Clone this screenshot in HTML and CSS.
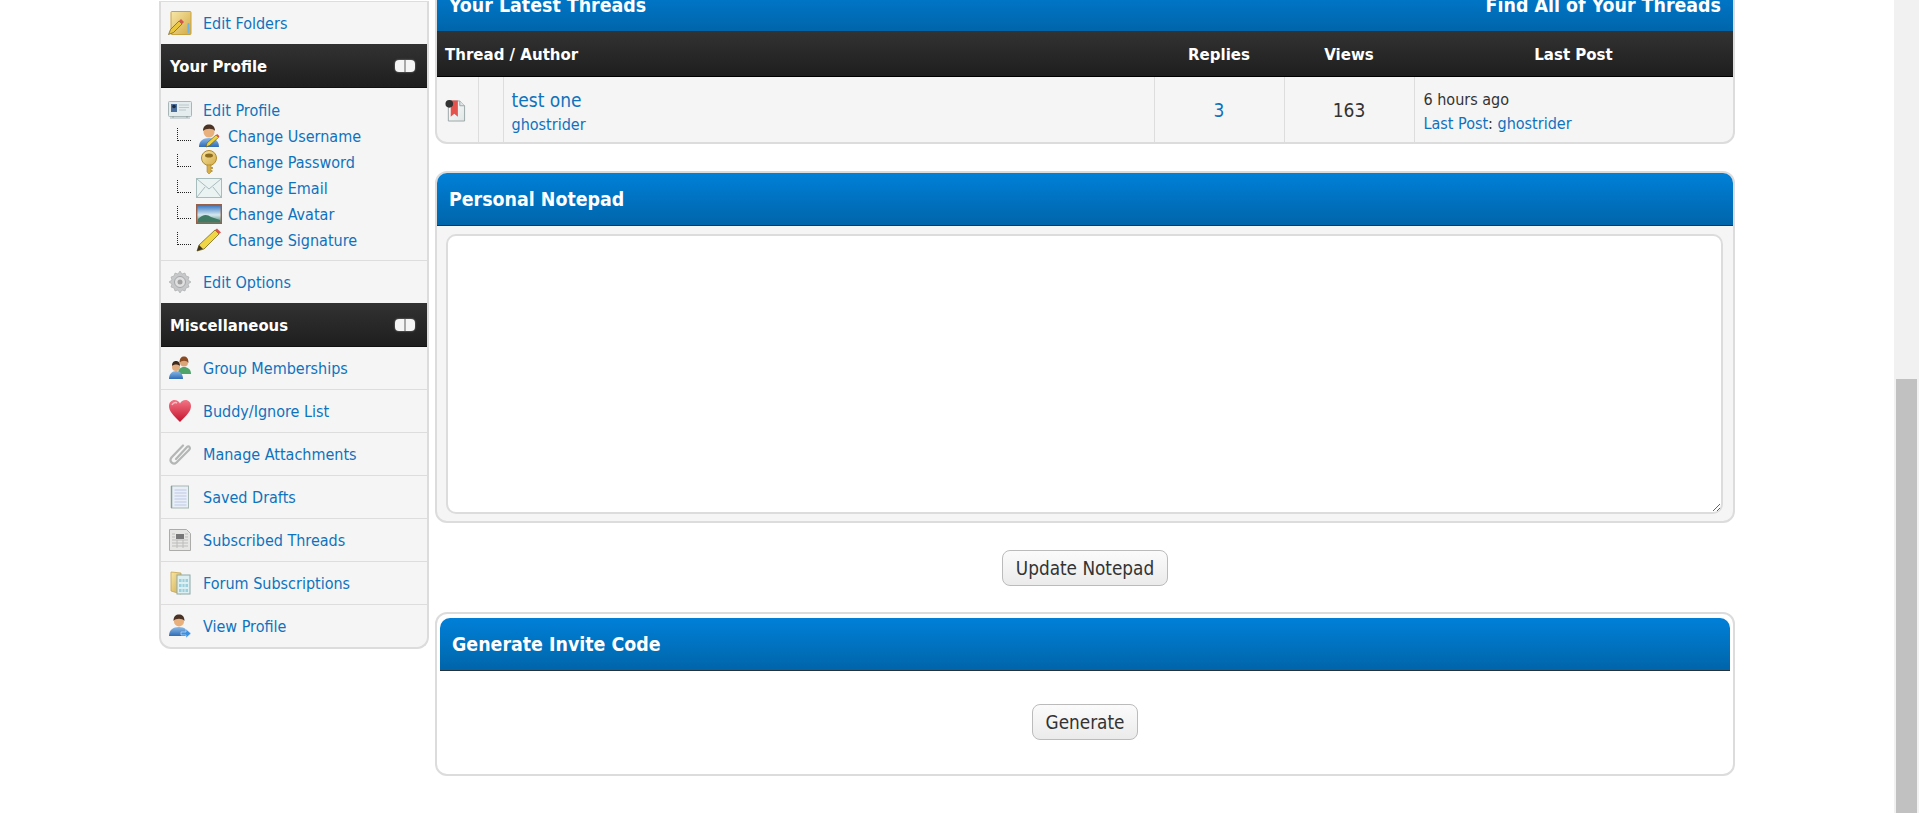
FILE: index.html
```html
<!DOCTYPE html>
<html lang="en">
<head>
<meta charset="utf-8">
<title>User Control Panel</title>
<link rel="stylesheet" href="styles.css">
</head>
<body>
<svg class="defs" width="0" height="0" aria-hidden="true">
  <defs>
    <linearGradient id="gold" x1="0" y1="0" x2="1" y2="1"><stop offset="0" stop-color="#f8e7a8"/><stop offset="1" stop-color="#d2aa44"/></linearGradient>
    <linearGradient id="blueshirt" x1="0" y1="0" x2="0" y2="1"><stop offset="0" stop-color="#8ab9e8"/><stop offset="1" stop-color="#2f6cb5"/></linearGradient>
    <linearGradient id="heart" x1="0" y1="0" x2="0" y2="1"><stop offset="0" stop-color="#f27585"/><stop offset="1" stop-color="#c5122c"/></linearGradient>
    <linearGradient id="sky" x1="0" y1="0" x2="0" y2="1"><stop offset="0" stop-color="#2f6fc0"/><stop offset=".55" stop-color="#d5e9ee"/><stop offset="1" stop-color="#3d7d6a"/></linearGradient>
    <linearGradient id="page" x1="0" y1="0" x2="1" y2="1"><stop offset="0" stop-color="#fff"/><stop offset="1" stop-color="#dfe5e5"/></linearGradient>
  </defs>
</svg>
<div class="page">
  <div class="layout">
    <aside class="sidebar">
      <a class="item item-last" href="#">
        <svg class="ico" viewBox="0 0 24 24"><rect x="3" y=".5" width="20" height="23" rx="1" fill="url(#gold)" stroke="#c9a23e"/><path d="M.5 23.500l2-5L11 10l3 3-8.500 8.500z" fill="#e9c63c" stroke="#6e5c20" stroke-width=".7"/><path d="M11 10l2-2 3 3-2 2z" fill="#d9534f"/><rect x="19.500" y="12" width="2" height="10" rx="1" fill="#6fb4e6"/></svg>
        <span>Edit Folders</span>
      </a>
      <div class="side-head"><span>Your Profile</span><i class="toggle"></i></div>
      <div class="item-group">
        <a class="item-plain" href="#">
          <svg class="ico" viewBox="0 0 24 18"><rect x=".5" y=".5" width="23" height="15" rx="1" fill="#e4ecee" stroke="#a9b6b8"/><rect x="3" y="3" width="6" height="8" fill="#4b6e9c"/><circle cx="6" cy="5.500" r="1.800" fill="#1d2b3e"/><path d="M11 4h10M11 6.500h10M11 9h7" stroke="#bcc8ca"/><path d="M5 15v2M19 15v2" stroke="#8b9a9c"/><path d="M2 17h20" stroke="#a9b6b8"/></svg>
          <span>Edit Profile</span>
        </a>
        <a class="item-sub" href="#"><i class="tree"></i>
          <svg class="ico-sub" viewBox="0 0 24 24"><path d="M2 23c0-6 4-9 10-9s10 3 10 9z" fill="url(#blueshirt)"/><circle cx="12" cy="8" r="5.500" fill="#e8b07c"/><path d="M6 7c0-5 3-6.500 6-6.500s6 1.500 6 6.500c-2-3-9-3-12 0z" fill="#4a3324"/><path d="M9 23l1-4 9-8 2.500 2.500-9 8z" fill="#ecd23c" stroke="#5c5420" stroke-width=".6"/><path d="M19 11l1.200-1 2.300 2.300-1 1.200z" fill="#d9534f"/></svg>
          <span>Change Username</span></a>
        <a class="item-sub" href="#"><i class="tree"></i>
          <svg class="ico-sub" viewBox="0 0 24 24"><circle cx="12" cy="8" r="7.500" fill="url(#gold)" stroke="#b28a2a"/><ellipse cx="12" cy="5.500" rx="4" ry="2" fill="#8f6d1e"/><path d="M10 15h4v7l-2 2-2-2z" fill="#d6ae4a" stroke="#a8842a" stroke-width=".6"/><path d="M14 18h2M14 21h1.500" stroke="#a8842a" stroke-width="1.300"/></svg>
          <span>Change Password</span></a>
        <a class="item-sub" href="#"><i class="tree"></i>
          <svg class="ico-sub ico-wide" viewBox="0 0 26 20"><rect x=".5" y=".5" width="25" height="19" fill="#eaf2f2" stroke="#a7bcbc"/><path d="M1 1l12 10L25 1M1 19l8-10M25 19l-8-10" fill="none" stroke="#a9bcbc"/></svg>
          <span>Change Email</span></a>
        <a class="item-sub" href="#"><i class="tree"></i>
          <svg class="ico-sub ico-wide" viewBox="0 0 26 20"><rect x=".7" y=".7" width="24.600" height="18.600" fill="url(#sky)" stroke="#96604a" stroke-width="1.400"/><path d="M2 15c5-5 9-5 13-2l9 3v2H2z" fill="#3f7a64"/></svg>
          <span>Change Avatar</span></a>
        <a class="item-sub" href="#"><i class="tree"></i>
          <svg class="ico-sub ico-wide" viewBox="0 0 26 24"><path d="M1 23l2-6L19 2l4 4L8 21z" fill="#f0d545" stroke="#7a6a20" stroke-width=".8"/><path d="M19 2l2-1.500 4 4L23 6z" fill="#d9534f"/><path d="M1 23l2-6 4 4z" fill="#3c3424"/></svg>
          <span>Change Signature</span></a>
      </div>
      <a class="item item-last" href="#">
        <svg class="ico" viewBox="0 0 24 24"><path d="M12 1l2 3 3-1 1 3 3 1-1 3 3 2-3 2 1 3-3 1-1 3-3-1-2 3-2-3-3 1-1-3-3-1 1-3-3-2 3-2-1-3 3-1 1-3 3 1z" fill="#c6c8ca" stroke="#a5a7a9" stroke-width=".6"/><circle cx="12" cy="12" r="5.500" fill="#e0e0e0" stroke="#a5a7a9"/><circle cx="12" cy="12" r="2.500" fill="#a0a0a0"/></svg>
        <span>Edit Options</span>
      </a>
      <div class="side-head"><span>Miscellaneous</span><i class="toggle"></i></div>
      <a class="item" href="#">
        <svg class="ico" viewBox="0 0 24 24"><circle cx="16" cy="6.500" r="4" fill="#dca577"/><path d="M11.500 7c0-5 2-6.500 4.500-6.500s4.500 1.500 4.500 6.500c-2-3-7-3-9 0z" fill="#8a4a22"/><path d="M10 18c0-5 2.500-7 6-7s7 2 7 7z" fill="#4da56a"/><circle cx="8" cy="11" r="4" fill="#e0ac80"/><path d="M4 10c0-4 2-5 4-5s4 1 4 5c-2-2-6-2-8 0z" fill="#3d2a1d"/><path d="M1 23c0-5 3-8 7-8s7 3 7 8z" fill="url(#blueshirt)"/></svg>
        <span>Group Memberships</span>
      </a>
      <a class="item" href="#">
        <svg class="ico" viewBox="0 0 24 24"><path d="M12 23C5 16 1 12 1 7c0-3.500 2.500-6 5.500-6C9 1 11 2.500 12 4.500 13 2.500 15 1 17.500 1 20.500 1 23 3.500 23 7c0 5-4 9-11 16z" fill="url(#heart)"/><path d="M4 6c1-2 3-3 5-2" stroke="#fbb9c0" stroke-width="1.500" fill="none"/></svg>
        <span>Buddy/Ignore List</span>
      </a>
      <a class="item" href="#">
        <svg class="ico" viewBox="0 0 24 24"><path d="M8 17L19 5c2-2 4 1 2 3L8.500 20.500c-3 3-8-1-5-5L15 3.500" fill="none" stroke="#b4b6b6" stroke-width="2.200" stroke-linecap="round"/></svg>
        <span>Manage Attachments</span>
      </a>
      <a class="item" href="#">
        <svg class="ico" viewBox="0 0 24 24"><rect x="3.500" y="1" width="17" height="22" fill="#e9eef8" stroke="#a8b8b4"/><path d="M6.500 5h12M6.500 8h12M6.500 11h12M6.500 14h12M6.500 17h12M6.500 20h12" stroke="#bccae4"/><path d="M3.500 1v22" stroke="#86a298" stroke-width="1.500"/></svg>
        <span>Saved Drafts</span>
      </a>
      <a class="item" href="#">
        <svg class="ico" viewBox="0 0 24 24"><path d="M1.500 1.500h17l4 4v17h-21z" fill="#e6e6e4" stroke="#acacaa"/><rect x="8" y="6" width="8" height="5" fill="#777"/><path d="M4 6h3M4 9h3M4 12h16M4 15h16M4 18h16M17 6h3M17 9h3M9 12v8M15 12v8" stroke="#bcbcba"/></svg>
        <span>Subscribed Threads</span>
      </a>
      <a class="item" href="#">
        <svg class="ico" viewBox="0 0 24 24"><path d="M3 1l10 1v21L3 20z" fill="url(#gold)" stroke="#c39c38" stroke-width=".7"/><rect x="9" y="4" width="13" height="19" fill="#dceff2" stroke="#8ea8a8"/><path d="M11 8h9v3h-9zM11 13h9v3h-9zM11 18h9v3h-9z" fill="#9cd0dc"/><path d="M14 8v13M17 8v13" stroke="#dceff2"/></svg>
        <span>Forum Subscriptions</span>
      </a>
      <a class="item item-end" href="#">
        <svg class="ico" viewBox="0 0 24 24"><path d="M1 22c0-6 4-9 10-9s9 3 9 9z" fill="url(#blueshirt)"/><circle cx="11" cy="7.500" r="5" fill="#e8b07c"/><path d="M5.500 7c0-5 2.500-6.500 5.500-6.500s5.500 1.500 5.500 6.500c-2-3-9-3-11 0z" fill="#4a3324"/><path d="M13 18h5v-3l5 4.500-5 4.500v-3h-5z" fill="#3d8fe0" stroke="#dfefff" stroke-width=".6"/></svg>
        <span>View Profile</span>
      </a>
    </aside>
    <main class="content">
      <section class="panel">
        <header class="panel-head head-split"><span>Your Latest Threads</span><a class="head-link" href="#">Find All of Your Threads</a></header>
        <table class="threads">
          <colgroup>
            <col class="c-ico"><col class="c-pre"><col class="c-main"><col class="c-num"><col class="c-num"><col class="c-last">
          </colgroup>
          <thead>
            <tr><th colspan="3" class="th-left">Thread / Author</th><th>Replies</th><th>Views</th><th>Last Post</th></tr>
          </thead>
          <tbody>
            <tr>
              <td class="cell-ico">
                <svg class="ico-thread" viewBox="0 0 22 24"><path d="M3.500 1.500h12l5 5v16h-17z" fill="url(#page)" stroke="#9aa6a6"/><path d="M15.500 1.500v5h5" fill="#dfe5e5" stroke="#9aa6a6"/><path d="M6 1h7.500v17L9.700 15 6 18z" fill="#e5534f"/><circle cx="4.500" cy="4.500" r="4" fill="#333"/></svg>
              </td>
              <td></td>
              <td class="cell-main"><a class="thread-title" href="#">test one</a><a class="thread-author" href="#">ghostrider</a></td>
              <td class="cell-num"><a href="#">3</a></td>
              <td class="cell-num">163</td>
              <td class="cell-last"><span class="last-time">6 hours ago</span><span class="last-by"><a href="#">Last Post</a>: <a href="#">ghostrider</a></span></td>
            </tr>
          </tbody>
        </table>
      </section>
      <section class="panel panel-note">
        <header class="panel-head"><span>Personal Notepad</span></header>
        <div class="note-body"><textarea class="note" aria-label="Personal Notepad"></textarea></div>
      </section>
      <div class="actions"><button class="btn" type="button">Update Notepad</button></div>
      <section class="panel panel-invite">
        <header class="panel-head invite-head"><span>Generate Invite Code</span></header>
        <div class="invite-body"><button class="btn" type="button">Generate</button></div>
      </section>
    </main>
  </div>
</div>
<div class="scrollbar"><div class="thumb"></div></div>
</body>
</html>
```
FILE: styles.css
```css
* { box-sizing: border-box; }
html, body { height: 100%; }
body {
  margin: 0;
  display: flex;
  overflow: hidden;
  background: #fff;
  color: #333;
  font-family: "DejaVu Sans Condensed", "DejaVu Sans", sans-serif;
  font-size: 16px;
}
a { color: #0f72bd; text-decoration: none; }
.defs { position: absolute; }
.page { flex: 1; min-width: 0; overflow: hidden; }
.layout {
  display: flex;
  align-items: flex-start;
  gap: 6px;
  margin: -23px 0 0 159px;
  width: 1576px;
}
.sidebar {
  width: 270px;
  flex: none;
  margin-top: 24px;
  background: #f5f5f5;
  border: 2px solid #dcdcdc;
  border-top: 1px solid #ddd;
  border-radius: 0 0 12px 12px;
}
.item {
  display: flex;
  align-items: center;
  height: 43px;
  padding-left: 7px;
  border-bottom: 1px solid #ddd;
  gap: 11px;
  background: #f5f5f5;
}
.item-last { border-bottom: 0; border-radius: 0 0 12px 12px; height: 42px; }
.item-end { border-bottom: 0; border-radius: 0 0 12px 12px; height: 42px; }
.ico { width: 24px; height: 24px; flex: none; }
.side-head {
  display: flex;
  align-items: center;
  justify-content: space-between;
  height: 44px;
  padding: 1px 12px 0 9px;
  background: linear-gradient(#323232, #1e1e1e);
  border-bottom: 1px solid #111;
  color: #fff;
  font-weight: 700;
  font-size: 16.500px;
}
.toggle {
  width: 20px;
  height: 12px;
  border-radius: 4px;
  background: linear-gradient(90deg, #f4f4f4 0 46%, #a8a8a8 46% 54%, #f4f4f4 54%);
  box-shadow: 0 0 2px rgba(255, 255, 255, .5);
}
.item-group { padding: 9px 0 7px; border-bottom: 1px solid #ddd; }
.item-plain {
  display: flex;
  align-items: center;
  height: 26px;
  padding-left: 7px;
  gap: 11px;
}
.item-sub {
  display: flex;
  align-items: center;
  height: 26px;
  padding-left: 16px;
}
.tree {
  width: 14px;
  height: 13px;
  margin: -3px 0 0;
  flex: none;
  border-left: 1px dotted #222;
  border-bottom: 1px dotted #222;
}
.ico-sub { width: 24px; height: 24px; flex: none; margin: 0 7px 0 6px; }
.ico-wide { width: 26px; margin: 0 6px 0 5px; }
.content { width: 1300px; flex: none; }
.panel {
  border: 2px solid #dcdcdc;
  border-radius: 12px;
  background: #f5f5f5;
  overflow: hidden;
}
.panel-head {
  height: 53px;
  display: flex;
  align-items: center;
  padding: 0 12px;
  background: linear-gradient(#0080d8, #0065aa);
  border-bottom: 1px solid #263238;
  color: #fff;
  font-weight: 700;
  font-size: 19.400px;
}
.head-split { justify-content: space-between; }
.head-link { color: #fff; }
.threads { width: 100%; border-collapse: collapse; table-layout: fixed; }
.c-ico { width: 41px; }
.c-pre { width: 25px; }
.c-main { width: 651px; }
.c-num { width: 130px; }
.threads th {
  height: 44px;
  background: linear-gradient(#323232, #1e1e1e);
  border-bottom: 1px solid #000;
  color: #fff;
  font-size: 16.700px;
  font-weight: 700;
  padding: 0;
}
.threads .th-left { text-align: left; padding-left: 8px; }
.threads td { height: 66px; padding: 0; border-left: 1px solid #ddd; }
.threads td:first-child { border-left: 0; }
.threads .cell-ico { padding: 3px 0 0 8px; }
.ico-thread { display: block; width: 21px; height: 24px; }
.threads .cell-main { padding: 11px 0 0 8px; vertical-align: top; }
.thread-title { display: block; font-size: 19px; line-height: 24px; }
.thread-author { display: block; font-size: 16px; line-height: 26px; }
.threads .cell-num { text-align: center; font-size: 19px; padding-top: 2px; }
.threads .cell-last { padding: 11px 0 0 9px; vertical-align: top; }
.last-time { display: block; font-size: 16px; line-height: 24px; }
.last-by { display: block; font-size: 16px; line-height: 23px; }
.panel-note { margin-top: 27px; }
.note-body { padding: 8px 10px 7px 9px; height: 295px; }
.note {
  display: block;
  width: 100%;
  height: 280px;
  border: 2px solid #dcdcdc;
  border-radius: 10px;
  background: #fff;
  resize: both;
}
.actions { display: flex; justify-content: center; padding: 27px 0 26px; }
.btn {
  height: 36px;
  padding: 0 13px;
  border: 1px solid #bbb;
  border-radius: 8px;
  background: linear-gradient(#fbfbfb, #ebebeb);
  color: #333;
  font-family: inherit;
  font-size: 18.800px;
}
.panel-invite { background: #fff; padding: 4px 3px; height: 164px; margin-bottom: 20px; }
.invite-head { border-radius: 10px 10px 0 0; }
.invite-body { display: flex; justify-content: center; padding-top: 33px; }
.scrollbar {
  flex: none;
  width: 25px;
  background: #f1f1f1;
  display: flex;
  flex-direction: column;
  justify-content: flex-end;
  padding: 0 2px;
}
.thumb { height: 434px; background: #c1c1c1; }
```
